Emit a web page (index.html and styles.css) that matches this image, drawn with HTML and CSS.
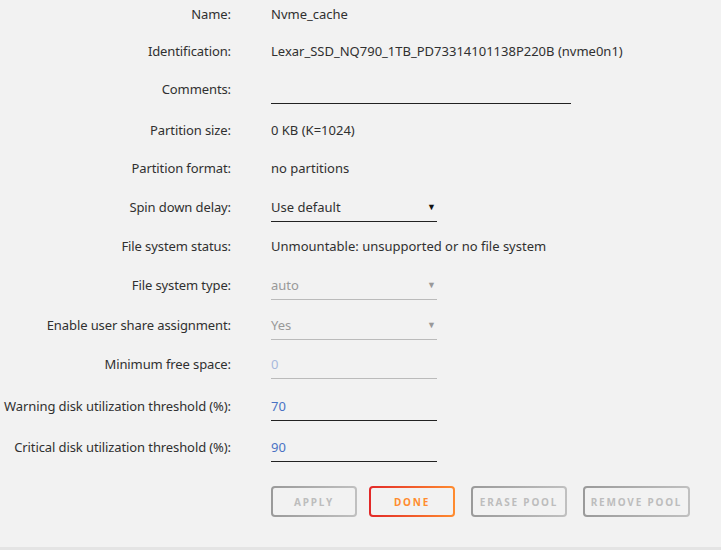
FILE: index.html
```html
<!DOCTYPE html>
<html>
<head>
<meta charset="utf-8">
<link rel="stylesheet" href="styles.css">
</head>
<body>
<div class="page">
  <form class="form">
    <div class="row h37"><div class="label">Name:</div><div class="value">Nvme_cache</div></div>
    <div class="row h38"><div class="label">Identification:</div><div class="value">Lexar_SSD_NQ790_1TB_PD73314101138P220B (nvme0n1)</div></div>
    <div class="row h41"><div class="label">Comments:</div><div class="value"><div class="field wide"></div></div></div>
    <div class="row h38"><div class="label">Partition size:</div><div class="value">0 KB (K=1024)</div></div>
    <div class="row h39"><div class="label">Partition format:</div><div class="value">no partitions</div></div>
    <div class="row h39"><div class="label">Spin down delay:</div><div class="value"><div class="field select"><span>Use default</span><span class="arrow">&#9660;</span></div></div></div>
    <div class="row h39"><div class="label">File system status:</div><div class="value">Unmountable: unsupported or no file system</div></div>
    <div class="row h40"><div class="label">File system type:</div><div class="value"><div class="field select disabled"><span>auto</span><span class="arrow">&#9660;</span></div></div></div>
    <div class="row h39"><div class="label">Enable user share assignment:</div><div class="value"><div class="field select disabled"><span>Yes</span><span class="arrow">&#9660;</span></div></div></div>
    <div class="row h42"><div class="label">Minimum free space:</div><div class="value"><div class="field select disabled num-dis"><span>0</span></div></div></div>
    <div class="row h41"><div class="label">Warning disk utilization threshold (%):</div><div class="value"><div class="field select num"><span>70</span></div></div></div>
    <div class="row h49"><div class="label">Critical disk utilization threshold (%):</div><div class="value"><div class="field select num"><span>90</span></div></div></div>
    <div class="row"><div class="label"></div>
      <div class="buttons">
        <span class="btn w-apply">Apply</span>
        <span class="btn done w-done">Done</span>
        <span class="btn w-erase">Erase Pool</span>
        <span class="btn w-remove">Remove Pool</span>
      </div>
    </div>
  </form>
  <div class="footer"></div>
</div>
</body>
</html>
```

FILE: styles.css
```css
html, body {
  margin: 0;
  padding: 0;
  background: #f2f2f2;
}
body {
  font-family: "Noto Sans", "Open Sans", sans-serif;
  font-size: 13px;
  color: #303030;
}
.page {
  width: 721px;
  height: 550px;
  display: flex;
  flex-direction: column;
}
.form {
  padding-top: 4px;
  flex: 1;
}
.row {
  display: grid;
  grid-template-columns: 231px 1fr;
  column-gap: 40px;
  line-height: 20px;
  align-items: start;
}
.h37 { height: 37px; }
.h38 { height: 38px; }
.h39 { height: 39px; }
.h40 { height: 40px; }
.h41 { height: 41px; }
.h42 { height: 42px; }
.h49 { height: 49px; }
.label {
  text-align: right;
  white-space: nowrap;
  letter-spacing: -0.1px;
}
.value {
  white-space: nowrap;
}
.field {
  border-bottom: 1px solid #222;
  padding-bottom: 4px;
  height: 20px;
}
.field.wide {
  width: 300px;
}
.select {
  width: 166px;
  display: flex;
  justify-content: space-between;
  align-items: center;
}
.arrow {
  font-size: 9px;
  color: #111;
  margin-right: 1px;
  line-height: 20px;
}
.disabled {
  border-bottom-color: #bbb;
  color: #999;
}
.disabled .arrow {
  color: #999;
}
.num { color: #4a72c4; }
.num-dis { color: #a7b9dd; }
.buttons {
  display: flex;
  gap: 12px;
}
.btn {
  box-sizing: border-box;
  height: 31px;
  display: flex;
  align-items: center;
  justify-content: center;
  font-size: 10px;
  font-weight: bold;
  letter-spacing: 1.8px;
  text-transform: uppercase;
  color: #bdbdbd;
  border: 2px solid transparent;
  border-radius: 4px;
  background: linear-gradient(#f2f2f2, #f2f2f2) padding-box,
              linear-gradient(90deg, #9a9a9a, #c0c0c0) border-box;
}
.btn.done {
  color: #ff8c2f;
  background: linear-gradient(#f2f2f2, #f2f2f2) padding-box,
              linear-gradient(90deg, #e22828, #ff8c2f) border-box;
}
.w-apply { width: 86px; }
.w-done { width: 86px; }
.w-erase { width: 96px; margin-left: 4px; }
.w-remove { width: 107px; margin-left: 4px; }
.footer {
  height: 3px;
  background: #e4e4e4;
}
```
